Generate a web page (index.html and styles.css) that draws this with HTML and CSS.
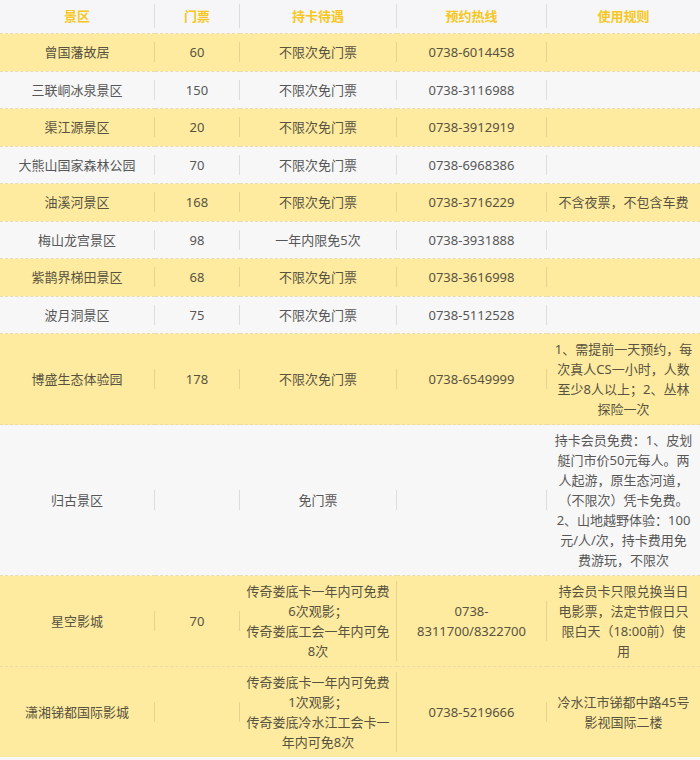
FILE: index.html
```html
<!DOCTYPE html>
<html lang="zh-CN">
<head>
<meta charset="utf-8">
<title>景区</title>
<link rel="stylesheet" href="styles.css">
</head>
<body>
<table class="tbl">
  <colgroup>
    <col class="w1"><col class="w2"><col class="w3"><col class="w4"><col class="w5">
  </colgroup>
  <thead>
    <tr>
      <th><div class="c">景区</div></th>
      <th><div class="c">门票</div></th>
      <th><div class="c">持卡待遇</div></th>
      <th><div class="c">预约热线</div></th>
      <th><div class="c last">使用规则</div></th>
    </tr>
  </thead>
  <tbody>
    <tr class="y"><td><div class="c">曾国藩故居</div></td><td><div class="c">60</div></td><td><div class="c">不限次免门票</div></td><td><div class="c">0738-6014458</div></td><td><div class="c last"></div></td></tr>
    <tr class="g"><td><div class="c">三联峒冰泉景区</div></td><td><div class="c">150</div></td><td><div class="c">不限次免门票</div></td><td><div class="c">0738-3116988</div></td><td><div class="c last"></div></td></tr>
    <tr class="y"><td><div class="c">渠江源景区</div></td><td><div class="c">20</div></td><td><div class="c">不限次免门票</div></td><td><div class="c">0738-3912919</div></td><td><div class="c last"></div></td></tr>
    <tr class="g"><td><div class="c">大熊山国家森林公园</div></td><td><div class="c">70</div></td><td><div class="c">不限次免门票</div></td><td><div class="c">0738-6968386</div></td><td><div class="c last"></div></td></tr>
    <tr class="y"><td><div class="c">油溪河景区</div></td><td><div class="c">168</div></td><td><div class="c">不限次免门票</div></td><td><div class="c">0738-3716229</div></td><td><div class="c last">不含夜票，不包含车费</div></td></tr>
    <tr class="g"><td><div class="c">梅山龙宫景区</div></td><td><div class="c">98</div></td><td><div class="c">一年内限免5次</div></td><td><div class="c">0738-3931888</div></td><td><div class="c last"></div></td></tr>
    <tr class="y"><td><div class="c">紫鹊界梯田景区</div></td><td><div class="c">68</div></td><td><div class="c">不限次免门票</div></td><td><div class="c">0738-3616998</div></td><td><div class="c last"></div></td></tr>
    <tr class="g"><td><div class="c">波月洞景区</div></td><td><div class="c">75</div></td><td><div class="c">不限次免门票</div></td><td><div class="c">0738-5112528</div></td><td><div class="c last"></div></td></tr>
    <tr class="y"><td><div class="c">博盛生态体验园</div></td><td><div class="c">178</div></td><td><div class="c">不限次免门票</div></td><td><div class="c">0738-6549999</div></td><td><div class="c last">1、需提前一天预约，每<br>次真人CS一小时，人数<br>至少8人以上；2、丛林<br>探险一次</div></td></tr>
    <tr class="g"><td><div class="c">归古景区</div></td><td><div class="c"></div></td><td><div class="c">免门票</div></td><td><div class="c"></div></td><td><div class="c last">持卡会员免费：1、皮划<br>艇门市价50元每人。两<br>人起游，原生态河道，<br>（不限次）凭卡免费。<br>2、山地越野体验：100<br>元/人/次，持卡费用免<br>费游玩，不限次</div></td></tr>
    <tr class="y"><td><div class="c">星空影城</div></td><td><div class="c">70</div></td><td><div class="c">传奇娄底卡一年内可免费<br>6次观影；<br>传奇娄底工会一年内可免<br>8次</div></td><td><div class="c">0738-<br>8311700/8322700</div></td><td><div class="c last">持会员卡只限兑换当日<br>电影票，法定节假日只<br>限白天（18:00前）使<br>用</div></td></tr>
    <tr class="y"><td><div class="c">潇湘锑都国际影城</div></td><td><div class="c"></div></td><td><div class="c">传奇娄底卡一年内可免费<br>1次观影；<br>传奇娄底冷水江工会卡一<br>年内可免8次</div></td><td><div class="c">0738-5219666</div></td><td><div class="c last">冷水江市锑都中路45号<br>影视国际二楼</div></td></tr>
  </tbody>
</table>
</body>
</html>
```

FILE: styles.css
```css
html, body {
  margin: 0;
  padding: 0;
  background: #f7f7f8;
}
body {
  font-family: "Noto Sans", "Noto Sans CJK SC", sans-serif;
  font-size: 13px;
  color: #575757;
}
.tbl {
  width: 700px;
  table-layout: fixed;
  border-collapse: collapse;
  border-spacing: 0;
}
.w1 { width: 155px; }
.w2 { width: 85px; }
.w3 { width: 157px; }
.w4 { width: 150px; }
.w5 { width: 153px; }

.tbl th {
  box-sizing: border-box;
  height: 33px;
  padding: 4px 0 5px;
  background: #f6f6f8;
  color: #f6c722;
  font-weight: 700;
  font-size: 13px;
  vertical-align: middle;
}
.tbl th .c {
  line-height: 24px;
}
.tbl td {
  box-sizing: border-box;
  height: 37.5px;
  padding: 5px 0;
  vertical-align: middle;
  text-align: center;
  border-top: 1px dashed #eadca6;
}
.c {
  min-height: 20px;
  line-height: 20px;
  padding: 0 5px;
  text-align: center;
  border-right: 1px solid #dcdcdc;
  white-space: nowrap;
}
.y .c { border-right-color: #e4d48e; }
.c.last {
  border-right: none;
  padding: 0 6px;
}
.y td {
  background: #feeba0;
  color: #58533f;
}
.g td {
  background: #f7f7f8;
  color: #575757;
}
```
